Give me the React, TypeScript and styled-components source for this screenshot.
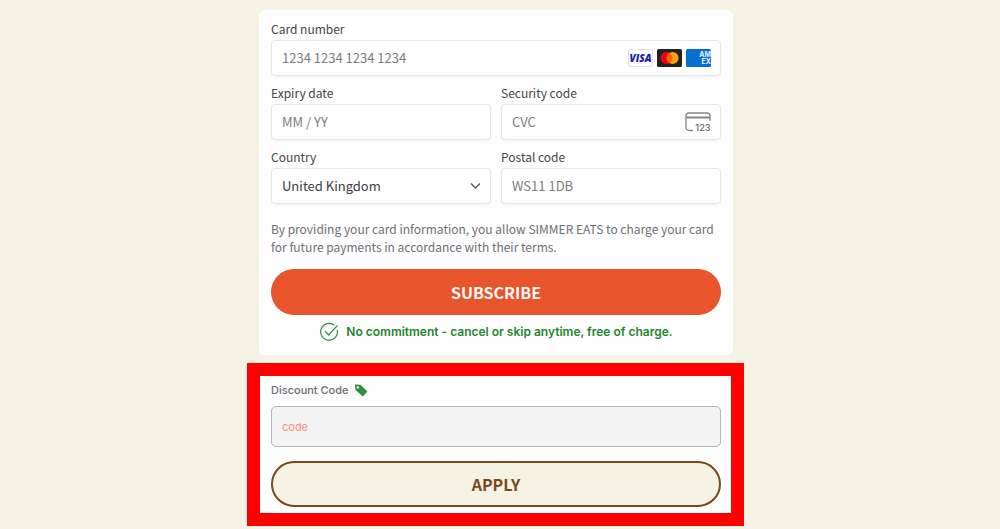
import React from "react";
import styled, { createGlobalStyle } from "styled-components";

const sans = `"Noto Sans CJK JP", "Open Sans", sans-serif`;
const grotesque = `Inter, "Liberation Sans", sans-serif`;

const GlobalStyle = createGlobalStyle`
  *, *::before, *::after { box-sizing: border-box; }
  body { margin: 0; background: #f7f3e4; font-family: ${sans}; }
`;

const Page = styled.main`
  display: flex;
  justify-content: center;
  padding: 10px 9px 3px 0;
`;

const Column = styled.div`
  display: flex;
  flex-direction: column;
  gap: 8px;
  width: 100%;
  max-width: 497px;
`;

const PaymentCard = styled.form`
  margin: 0 11px 0 12px;
  padding: 10px 12px 12px;
  border-radius: 6px;
  background: #fefefe;
`;

const Fields = styled.div`
  display: grid;
  grid-template-columns: 1fr 1fr;
  gap: 8px 10px;
`;

const Field = styled.div<{ $wide?: boolean }>`
  display: flex;
  flex-direction: column;
  gap: 2px;
  min-width: 0;
  grid-column: ${(p) => (p.$wide ? "1 / -1" : "auto")};
`;

const Label = styled.label`
  font-size: 12px;
  line-height: 18px;
  color: #45464a;
`;

const Control = styled.div`
  display: flex;
  align-items: center;
  gap: 4px;
  height: 36px;
  padding: 0 9px 0 10px;
  border: 1px solid #e7e7e8;
  border-radius: 4px;
  background: #fff;
  box-shadow: 0 1px 2px rgba(0, 0, 0, 0.06);
`;

const TextInput = styled.input`
  flex: 1;
  min-width: 0;
  padding: 0;
  border: 0;
  outline: 0;
  background: transparent;
  font: 13px/20px ${sans};
  color: #35363a;
  &::placeholder { color: #7b7c80; opacity: 1; }
`;

const Select = styled.select`
  flex: 1;
  min-width: 0;
  padding: 0;
  border: 0;
  outline: 0;
  appearance: none;
  background: transparent;
  font: 13px/20px ${sans};
  color: #3c3d42;
`;

const Terms = styled.p`
  margin: 16px 0 13px;
  font-size: 12px;
  line-height: 18px;
  color: #6e6f73;
`;

const PillButton = styled.button<{ $outline?: boolean }>`
  display: block;
  width: 100%;
  height: 46px;
  padding: 0;
  border: ${(p) => (p.$outline ? "2px solid #79491a" : "0")};
  border-radius: 23px;
  background: ${(p) => (p.$outline ? "#f7f3e4" : "#e8542b")};
  color: ${(p) => (p.$outline ? "#79491a" : "#fffaf5")};
  font: bold 16px/24px ${sans};
`;

const Promise = styled.p`
  display: flex;
  align-items: center;
  justify-content: center;
  gap: 7px;
  margin: 7px 0 0;
  padding-bottom: 1px;
  font: 600 12px/20px ${grotesque};
  color: #23862d;
`;

const DiscountPanel = styled.form`
  padding: 5px 10px 6px 11px;
  border: 13px solid #ff0000;
  background: #fefefe;
`;

const DiscountLabel = styled.label`
  display: flex;
  align-items: center;
  gap: 5px;
  font: 500 11px/18px ${grotesque};
  color: #6d6e70;
`;

const DiscountInput = styled.input`
  display: block;
  width: 100%;
  height: 41px;
  margin: 7px 0 14px;
  padding: 0 10px;
  border: 1px solid #b5b6b7;
  border-radius: 5px;
  background: #f4f4f4;
  font: 11px/16px ${grotesque};
  color: #6d6e70;
  &::placeholder { color: #fb8b86; opacity: 1; }
`;

const VisaIcon = () => (
  <svg width="25" height="18" viewBox="0 0 25 18" aria-label="Visa" role="img">
    <rect x="0.5" y="0.5" width="24" height="17" rx="1.5" fill="#fdfdfe" stroke="#e3e4ea" />
    <text x="12.5" y="12.5" textAnchor="middle" fontFamily="Open Sans, sans-serif" fontSize="10" fontWeight="800" fontStyle="italic" fill="#171dab">VISA</text>
  </svg>
);

const MastercardIcon = () => (
  <svg width="25" height="18" viewBox="0 0 25 18" aria-label="Mastercard" role="img">
    <rect width="25" height="18" rx="1.5" fill="#242220" />
    <circle cx="9.4" cy="9" r="6" fill="#eb001b" />
    <circle cx="15.6" cy="9" r="6" fill="#f79e1b" />
    <path d="M12.500 3.900a6 6 0 0 1 0 10.200a6 6 0 0 1 0-10.200z" fill="#ff5f00" />
  </svg>
);

const AmexIcon = () => (
  <svg width="25" height="18" viewBox="0 0 25 18" aria-label="American Express" role="img">
    <rect width="25" height="18" rx="1.5" fill="#0670d1" />
    <text x="25" y="8" textAnchor="end" fontFamily="Inter, sans-serif" fontSize="7" fontWeight="700" fill="#e9f4ff">AM</text>
    <text x="25" y="15" textAnchor="end" fontFamily="Inter, sans-serif" fontSize="7" fontWeight="700" fill="#e9f4ff">EX</text>
  </svg>
);

const CvcIcon = () => (
  <svg width="26" height="20" viewBox="0 0 26 20" aria-hidden="true">
    <path d="M8 18.5H4A3 3 0 0 1 1 15.500V4A3 3 0 0 1 4 1H22A3 3 0 0 1 25 4V9" fill="none" stroke="#85868a" strokeWidth="1.3" />
    <path d="M1 5.500H25" stroke="#85868a" strokeWidth="2" />
    <text x="25.500" y="19" textAnchor="end" fontFamily="Inter, sans-serif" fontSize="9" fontWeight="600" fill="#77787c">123</text>
  </svg>
);

const Chevron = () => (
  <svg width="11" height="8" viewBox="0 0 11 8" aria-hidden="true">
    <path d="M1 1.500L5.500 6L10 1.500" fill="none" stroke="#55565a" strokeWidth="1.3" />
  </svg>
);

const CheckIcon = () => (
  <svg width="20" height="20" viewBox="0 0 20 20" aria-hidden="true" fill="none" stroke="#2f8f3d" strokeWidth="1.2">
    <path d="M15.400 3.300A8.400 8.400 0 1 0 18.300 8" />
    <path d="M6 9.200L9.700 13L18.500 3.300" />
  </svg>
);

const TagIcon = () => (
  <svg width="14" height="14" viewBox="0 0 14 14" aria-hidden="true">
    <path fillRule="evenodd" fill="#2e8f43" d="M1 1.500L6.500 1.800L13 8Q13.500 8.500 13 9L9.300 13Q8.800 13.500 8.200 13L1.300 6.800ZM3.800 3.200A1.200 1.200 0 1 0 3.800 5.600A1.200 1.200 0 1 0 3.800 3.200Z" />
  </svg>
);

export default function App() {
  return (
    <>
      <GlobalStyle />
      <Page>
        <Column>
          <PaymentCard onSubmit={(e) => e.preventDefault()}>
            <Fields>
              <Field $wide>
                <Label htmlFor="number">Card number</Label>
                <Control>
                  <TextInput id="number" placeholder="1234 1234 1234 1234" />
                  <VisaIcon />
                  <MastercardIcon />
                  <AmexIcon />
                </Control>
              </Field>
              <Field>
                <Label htmlFor="expiry">Expiry date</Label>
                <Control>
                  <TextInput id="expiry" placeholder="MM / YY" />
                </Control>
              </Field>
              <Field>
                <Label htmlFor="cvc">Security code</Label>
                <Control>
                  <TextInput id="cvc" placeholder="CVC" />
                  <CvcIcon />
                </Control>
              </Field>
              <Field>
                <Label htmlFor="country">Country</Label>
                <Control>
                  <Select id="country">
                    <option>United Kingdom</option>
                  </Select>
                  <Chevron />
                </Control>
              </Field>
              <Field>
                <Label htmlFor="postal">Postal code</Label>
                <Control>
                  <TextInput id="postal" placeholder="WS11 1DB" />
                </Control>
              </Field>
            </Fields>
            <Terms>
              By providing your card information, you allow SIMMER EATS to charge your card for future
              payments in accordance with their terms.
            </Terms>
            <PillButton type="submit">SUBSCRIBE</PillButton>
            <Promise>
              <CheckIcon />
              No commitment - cancel or skip anytime, free of charge.
            </Promise>
          </PaymentCard>
          <DiscountPanel onSubmit={(e) => e.preventDefault()}>
            <DiscountLabel htmlFor="discount">
              Discount Code
              <TagIcon />
            </DiscountLabel>
            <DiscountInput id="discount" placeholder="code" />
            <PillButton type="submit" $outline>APPLY</PillButton>
          </DiscountPanel>
        </Column>
      </Page>
    </>
  );
}
